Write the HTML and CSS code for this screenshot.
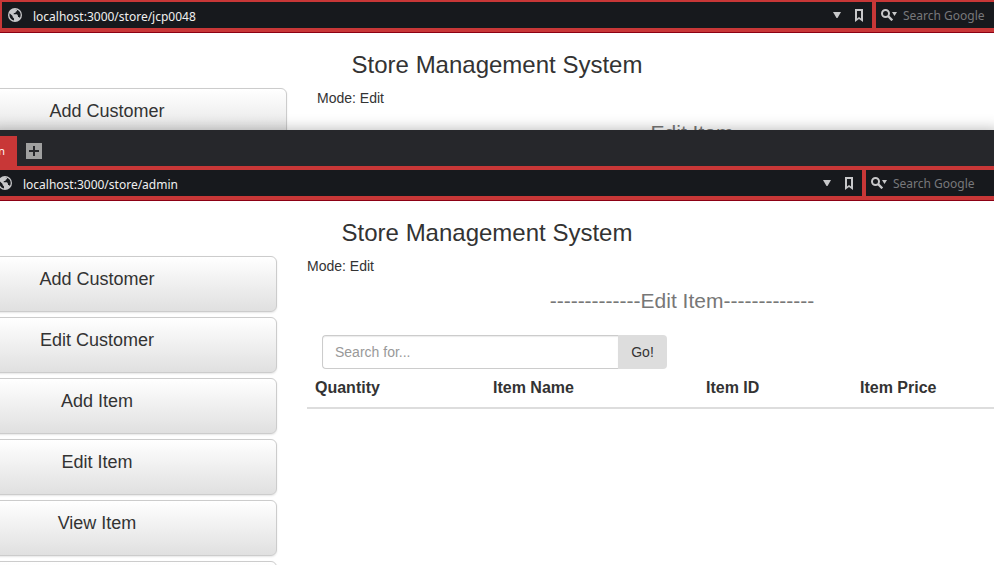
FILE: index.html
```html
<!DOCTYPE html>
<html lang="en">
<head>
<meta charset="utf-8">
<title>Store Management System</title>
<link rel="stylesheet" href="styles.css">
</head>
<body>
<svg class="sprite" aria-hidden="true">
  <symbol id="globe" viewBox="0 0 14 14">
    <circle cx="7" cy="7" r="7" fill="#c8c8ca"/>
    <path fill="#17191d" d="M1.600 5.200 4.600 8v1L6 10.400v2C3.200 12 1.400 9.600 1.400 7zM6 1.500 8.900 1.700 9 3 7.800 3.700 7.500 4.700 5.800 5.200 5.600 6.300h3.400L10 7.700v1.200h1l.8 1C13.200 7.900 13 5 11 3.100L9.500 2z"/>
  </symbol>
  <symbol id="arrow" viewBox="0 0 8 6"><path fill="#c8c8ca" d="M0 0h8L4.500 6h-1z"/></symbol>
  <symbol id="bookmark" viewBox="0 0 8 13"><path fill="#c8c8ca" d="M0 0h8v13L4 10l-4 3zM2 2v7.500L4 8l2 1.500V2z"/></symbol>
  <symbol id="search" viewBox="0 0 16 12">
    <circle cx="4.500" cy="4.500" r="3.500" fill="none" stroke="#c8c8ca" stroke-width="2"/>
    <path stroke="#c8c8ca" stroke-width="2.400" d="m7 7 4.300 4.300"/>
    <path fill="#c8c8ca" d="M11 3h5l-2.500 4z"/>
  </symbol>
</svg>

<section class="window window-back">
  <div class="toolbar">
    <div class="address">
      <svg class="icon-globe"><use href="#globe"/></svg>
      <input class="url" type="text" value="localhost:3000/store/jcp0048" aria-label="Address">
      <button class="tool" type="button" aria-label="History"><svg class="icon-arrow"><use href="#arrow"/></svg></button>
      <button class="tool" type="button" aria-label="Bookmark"><svg class="icon-bookmark"><use href="#bookmark"/></svg></button>
    </div>
    <div class="web-search">
      <svg class="icon-search"><use href="#search"/></svg>
      <input class="query" type="text" placeholder="Search Google" aria-label="Search Google">
    </div>
  </div>
  <div class="container">
    <h1 class="title">Store Management System</h1>
    <div class="row">
      <nav class="sidebar"><button class="menu-button" type="button">Add Customer</button></nav>
      <div class="content">
        <p class="mode">Mode: Edit</p>
        <h2 class="heading">-------------Edit Item-------------</h2>
      </div>
    </div>
  </div>
</section>

<section class="window window-front">
  <div class="tabs">
    <button class="tab" type="button">admin</button>
    <button class="new-tab" type="button" aria-label="New tab"><svg class="icon-plus" viewBox="0 0 16 16"><path stroke="#26272b" stroke-width="2" d="M8 3v10M3 8h10"/></svg></button>
  </div>
  <div class="toolbar">
    <div class="address">
      <svg class="icon-globe"><use href="#globe"/></svg>
      <input class="url" type="text" value="localhost:3000/store/admin" aria-label="Address">
      <button class="tool" type="button" aria-label="History"><svg class="icon-arrow"><use href="#arrow"/></svg></button>
      <button class="tool" type="button" aria-label="Bookmark"><svg class="icon-bookmark"><use href="#bookmark"/></svg></button>
    </div>
    <div class="web-search">
      <svg class="icon-search"><use href="#search"/></svg>
      <input class="query" type="text" placeholder="Search Google" aria-label="Search Google">
    </div>
  </div>
  <div class="container">
    <h1 class="title">Store Management System</h1>
    <div class="row">
      <nav class="sidebar">
        <button class="menu-button" type="button">Add Customer</button>
        <button class="menu-button" type="button">Edit Customer</button>
        <button class="menu-button" type="button">Add Item</button>
        <button class="menu-button" type="button">Edit Item</button>
        <button class="menu-button" type="button">View Item</button>
        <button class="menu-button" type="button" aria-label="More"></button>
      </nav>
      <div class="content">
        <p class="mode">Mode: Edit</p>
        <h2 class="heading">-------------Edit Item-------------</h2>
        <form class="item-search">
          <input class="item-query" type="text" placeholder="Search for..." aria-label="Search for">
          <button class="go" type="button">Go!</button>
        </form>
        <table class="items">
          <thead>
            <tr><th class="col-quantity">Quantity</th><th class="col-name">Item Name</th><th class="col-id">Item ID</th><th>Item Price</th></tr>
          </thead>
        </table>
      </div>
    </div>
  </div>
</section>
</body>
</html>
```
FILE: styles.css
```css
* { box-sizing: border-box; }

body {
  margin: 0;
  height: 100vh;
  overflow: hidden;
  display: flex;
  flex-direction: column;
  background: #fff;
  color: #333;
  font: 14px/20px "Liberation Sans", Arial, sans-serif;
}

button, input { margin: 0; padding: 0; border: 0; font: inherit; color: inherit; }
svg { display: block; flex: none; }
.sprite { position: absolute; width: 0; height: 0; }

/* Browser windows */
.window { width: calc(100% + 16px); background: #fff; overflow: hidden; }
.window-back { flex: 0 0 130px; }
.window-front {
  flex: 1;
  min-height: 0;
  margin-left: -10px;
  position: relative;
  box-shadow: 0 0 14px rgba(0, 0, 0, .3);
}

.tabs { display: flex; align-items: flex-end; height: 36px; background: #26272b; }
.tab {
  height: 30px;
  width: 27px;
  padding: 0 12px 2px 0;
  display: flex;
  justify-content: flex-end;
  align-items: center;
  background: #c83737;
  color: #fff;
  font: 11px "Open Sans", sans-serif;
}
.new-tab { margin: 0 9px 7px; background: #a0a0a0; }
.icon-plus { width: 16px; height: 16px; }

.toolbar {
  display: flex;
  gap: 4px;
  padding: 4px 0 4px 2px;
  background: #c83737;
  border-bottom: 1px solid #8c0014;
}
.window-back .toolbar { padding-top: 2px; }
.address, .web-search {
  display: flex;
  align-items: center;
  height: 26px;
  background: #17191d;
  font: 12px/20px "Noto Sans", sans-serif;
}
.address { flex: 1; padding: 0 9px 0 6px; gap: 11px; }
.web-search { width: 134px; padding-left: 5px; gap: 6px; }
.url, .query { min-width: 0; flex: 1; height: 26px; background: transparent; color: #f0f0f0; outline: 0; }
.url { padding-top: 2px; }
.query::placeholder { color: #77787b; opacity: 1; }
.tool { background: transparent; }
.tool + .tool { margin-left: 3px; }
.icon-globe { width: 14px; height: 14px; }
.icon-arrow { width: 8px; height: 6px; }
.icon-bookmark { width: 8px; height: 13px; }
.icon-search { width: 16px; height: 12px; }

/* Store page */
.container { width: 1140px; margin-left: -73px; }
.title {
  margin: 0;
  padding: 18px 0 9px;
  font-size: 24px;
  line-height: 28px;
  font-weight: 400;
  text-align: center;
}
.row { display: flex; gap: 30px; }
.sidebar { flex: 0 0 360px; display: flex; flex-direction: column; gap: 5px; }
.menu-button {
  height: 56px;
  padding-bottom: 10px;
  border: 1px solid #ccc;
  border-radius: 6px;
  background: linear-gradient(#fff, #e0e0e0);
  box-shadow: 0 1px 2px rgba(0, 0, 0, .1);
  font-size: 18px;
  line-height: 26px;
}
.content { flex: 1; }
.mode { margin: 0; }
.heading {
  margin: 13px 0 22px;
  color: #777;
  font-size: 21px;
  line-height: 24px;
  font-weight: 400;
  text-align: center;
}
.item-search { display: flex; width: 345px; margin-left: 15px; }
.item-query {
  flex: 1;
  min-width: 0;
  height: 34px;
  padding: 0 12px;
  border: 1px solid #ccc;
  border-right: 0;
  border-radius: 4px 0 0 4px;
  box-shadow: inset 0 1px 1px rgba(0, 0, 0, .08);
}
.item-query::placeholder { color: #999; opacity: 1; }
.go { width: 49px; border-radius: 0 4px 4px 0; background: #ddd; }

.items { width: 100%; table-layout: fixed; border-collapse: separate; border-spacing: 0; }
.items th {
  padding: 8px;
  border-bottom: 2px solid #ddd;
  font-size: 16px;
  line-height: 22px;
  text-align: left;
}
.col-quantity { width: 178px; }
.col-name { width: 213px; }
.col-id { width: 154px; }
```
